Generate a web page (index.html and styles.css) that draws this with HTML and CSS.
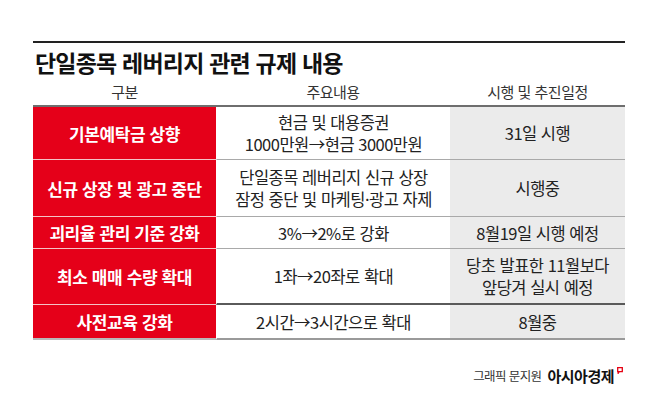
FILE: index.html
```html
<!DOCTYPE html>
<html lang="ko">
<head>
<meta charset="utf-8">
<link rel="stylesheet" href="styles.css">
</head>
<body>
<div class="wrap">
  <div class="top-rule"></div>
  <h1 class="title">단일종목 레버리지 관련 규제 내용</h1>
  <div class="grid">
    <div class="hd">구분</div>
    <div class="hd">주요내용</div>
    <div class="hd">시행 및 추진일정</div>

    <div class="cat">기본예탁금 상향</div>
    <div class="mid">현금 및 대용증권<br>1000만원→현금 3000만원</div>
    <div class="when">31일 시행</div>

    <div class="cat">신규 상장 및 광고 중단</div>
    <div class="mid">단일종목 레버리지 신규 상장<br>잠정 중단 및 마케팅·광고 자제</div>
    <div class="when">시행중</div>

    <div class="cat">괴리율 관리 기준 강화</div>
    <div class="mid">3%→2%로 강화</div>
    <div class="when">8월19일 시행 예정</div>

    <div class="cat">최소 매매 수량 확대</div>
    <div class="mid dark">1좌→20좌로 확대</div>
    <div class="when dark">당초 발표한 11월보다<br>앞당겨 실시 예정</div>

    <div class="cat last">사전교육 강화</div>
    <div class="mid last">2시간→3시간으로 확대</div>
    <div class="when last">8월중</div>
  </div>
  <div class="footer">
    <span class="credit">그래픽 문지원</span>
    <span class="brand">아시아경제</span>
    <svg class="mark" width="6" height="7" viewBox="0 0 6 7"><path d="M0.7 0.7 H5.3 V4.6 H2.2 L1.2 6.2 V4.6 H0.7 Z" fill="none" stroke="#e60012" stroke-width="1.3"/></svg>
  </div>
</div>
</body>
</html>
```

FILE: styles.css
```css
html, body {
  margin: 0;
  padding: 0;
  background: #ffffff;
}
body {
  font-family: "Noto Sans CJK KR", "Noto Sans", sans-serif;
  color: #222;
}
.wrap {
  width: 592px;
  margin-left: 33px;
  padding-top: 41px;
}
.top-rule {
  height: 2px;
  background: #222;
}
.title {
  margin: 0;
  height: 34px;
  line-height: 34px;
  font-size: 23px;
  font-weight: 700;
  color: #111;
  white-space: nowrap;
  padding-left: 2px;
  padding-top: 2px;
  letter-spacing: -0.8px;
}
.grid {
  display: grid;
  grid-template-columns: 183px 234px 175px;
  grid-template-rows: 28px 53px 57px 32px 56px 35px;
}
.hd {
  display: flex;
  align-items: center;
  justify-content: center;
  font-size: 15px;
  color: #333;
  border-bottom: 2px solid #6e6e6e;
  padding-bottom: 2px;
  letter-spacing: -0.5px;
}
.cat, .mid, .when {
  display: flex;
  align-items: center;
  justify-content: center;
  text-align: center;
  white-space: nowrap;
}
.cat {
  background: #e50019;
  color: #fff;
  font-size: 17px;
  font-weight: 700;
  letter-spacing: -0.4px;
  border-bottom: 1px solid #f4c2c6;
}
.mid {
  border-left: 1px solid #fff;
  font-size: 16.5px;
  line-height: 22px;
  letter-spacing: -0.5px;
  border-bottom: 1px solid #a9a9a9;
}
.when {
  background: #ebebeb;
  font-size: 16.5px;
  line-height: 22px;
  letter-spacing: -0.5px;
  border-bottom: 1px solid #a9a9a9;
}
.mid.dark, .when.dark {
  border-bottom: 2px solid #5a5a5a;
}
.cat.last, .mid.last, .when.last {
  border-bottom: 2px solid #9a9a9a;
}
.cat.last {
  border-bottom-color: #b9b9b9;
}
.footer {
  display: flex;
  align-items: flex-start;
  justify-content: flex-end;
  gap: 6px;
  margin-top: 26px;
  padding-right: 2px;
}
.credit {
  font-size: 12.5px;
  line-height: 20px;
  color: #333;
  letter-spacing: -0.6px;
}
.brand {
  font-size: 15px;
  line-height: 20px;
  font-weight: 700;
  color: #111;
  letter-spacing: -0.5px;
  margin-right: -3px;
}
.mark {
  margin-top: 1px;
}
```
